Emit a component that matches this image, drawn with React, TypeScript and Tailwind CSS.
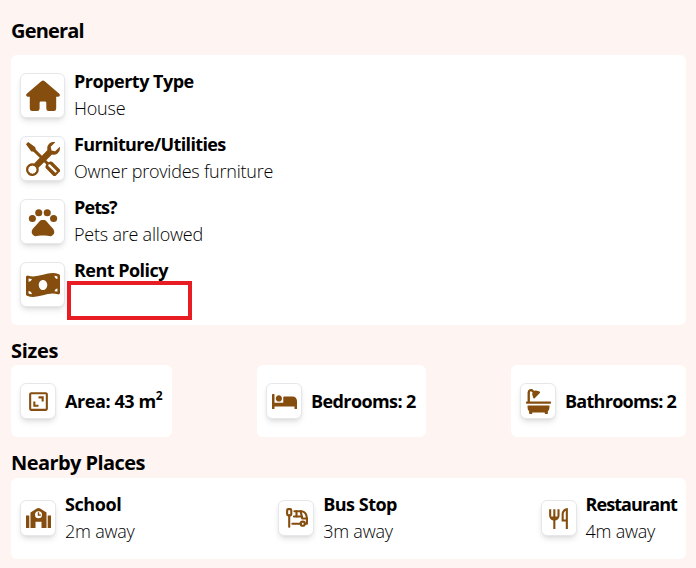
import type { ReactNode } from "react";
import { FaMoneyBillWave, FaBed, FaBath } from "react-icons/fa";
import { BsTools } from "react-icons/bs";
import { MdPets } from "react-icons/md";
import { BiArea } from "react-icons/bi";
import { RiRestaurantLine } from "react-icons/ri";
import { TbBusStop } from "react-icons/tb";

function HouseIcon() {
  return (
    <svg viewBox="0 0 34 34" width="34" height="34" fill="currentColor">
      <path d="M15.300 2.200Q17 .9 18.700 2.200L33 14.500Q34.300 15.700 33.600 17Q33.100 17.800 32 17.800H30.200V29.500Q30.200 32 27.800 32H22.700Q20.300 32 20.300 29.500V23.800Q20.300 22.500 19 22.500H14.900Q13.600 22.500 13.600 23.800V29.500Q13.600 32 11.200 32H6.200Q3.800 32 3.800 29.500V17.800H2Q.9 17.800 .4 17Q-.3 15.700 1 14.500z" />
    </svg>
  );
}

function SchoolIcon() {
  return (
    <svg viewBox="0 0 25 25" width="25" height="25" fill="currentColor">
      <path d="M0 9.500h3.300V22H0zM21.700 9.500H25V22h-3.300z" />
      <path
        fillRule="evenodd"
        d="M4.500 6.500 10.800 2.500Q12.500 1.500 14.200 2.500L20.500 6.500V22h-5v-6.300h-6V22h-5zM12.500 5.200a3.500 3.500 0 1 0 0 7 3.500 3.500 0 0 0 0-7z"
      />
      <path d="M11.800 6.200h1.400v2.200h1.600v1.300h-3z" />
    </svg>
  );
}

function Tile({ large, children }: { large?: boolean; children: ReactNode }) {
  return (
    <div
      className={`flex shrink-0 items-center justify-center rounded-md border border-gray-200 bg-white text-[#854d0e] shadow-md ${
        large ? "size-[45px]" : "size-9"
      }`}
    >
      {children}
    </div>
  );
}

function Heading({ children, className }: { children: ReactNode; className: string }) {
  return <h2 className={`text-[20px] leading-7 font-bold whitespace-nowrap ${className}`}>{children}</h2>;
}

function Entry({ large, icon, title, tracking, text }: { large?: boolean; icon: ReactNode; title: string; tracking: string; text?: string }) {
  return (
    <div className={`flex items-center gap-[9px] ${large ? "h-[63px]" : "h-[54px]"}`}>
      <Tile large={large}>{icon}</Tile>
      <div className={`h-[54px] text-[18px] leading-[27px] whitespace-nowrap ${large ? "-mt-[2px]" : "-mt-px"}`}>
        <h3 className={`font-bold ${tracking}`}>{title}</h3>
        {text ? <p className="font-light tracking-[-0.22px]">{text}</p> : null}
      </div>
    </div>
  );
}

function Size({ icon, children, className }: { icon: ReactNode; children: ReactNode; className: string }) {
  return (
    <div className="flex h-[72px] items-center gap-[9px] rounded-md bg-white px-[9px]">
      <Tile>{icon}</Tile>
      <span className={`text-[18px] leading-[27px] font-bold whitespace-nowrap ${className}`}>{children}</span>
    </div>
  );
}

export default function App() {
  return (
    <main className="h-[568px] w-[696px] overflow-hidden bg-[#fef4f2] pt-[17px] pr-[10px] pl-[11px] font-['Open_Sans','Noto_Sans',sans-serif] text-black">
      <Heading className="tracking-[-0.8px]">General</Heading>
      <section className="relative mt-[10px] h-[270px] rounded-md bg-white px-[9px] pt-[9px]">
        <Entry large icon={<HouseIcon />} title="Property Type" tracking="tracking-[-0.5px]" text="House" />
        <Entry large icon={<BsTools size={34} />} title="Furniture/Utilities" tracking="tracking-[-0.65px]" text="Owner provides furniture" />
        <Entry large icon={<MdPets size={34} />} title="Pets?" tracking="tracking-[-0.9px]" text="Pets are allowed" />
        <Entry large icon={<FaMoneyBillWave size={34} />} title="Rent Policy" tracking="tracking-[-0.54px]" />
        <div className="absolute top-[226px] left-[56px] h-[39px] w-[125px] border-4 border-[#e81c23]" />
      </section>
      <Heading className="mt-[12px] tracking-[-0.3px]">Sizes</Heading>
      <section className="flex justify-between">
        <Size icon={<BiArea size={25} />} className="w-[98px] tracking-[-0.42px]">
          Area: 43 m<sup className="top-[-8px] text-[12px]">2</sup>
        </Size>
        <Size icon={<FaBed size={25} />} className="w-[106px] tracking-[-0.6px]">Bedrooms: 2</Size>
        <Size icon={<FaBath size={25} />} className="w-[112px] tracking-[-0.72px]">Bathrooms: 2</Size>
      </section>
      <Heading className="mt-[12px] tracking-[-0.56px]">Nearby Places</Heading>
      <section className="mt-[1px] flex h-[81px] items-center justify-between rounded-md bg-white px-[9px] pb-px">
        <Entry icon={<SchoolIcon />} title="School" tracking="tracking-[-0.42px]" text="2m away" />
        <Entry icon={<TbBusStop size={25} />} title="Bus Stop" tracking="tracking-[-0.5px]" text="3m away" />
        <Entry icon={<RiRestaurantLine size={25} />} title="Restaurant" tracking="tracking-[-0.92px]" text="4m away" />
      </section>
    </main>
  );
}
